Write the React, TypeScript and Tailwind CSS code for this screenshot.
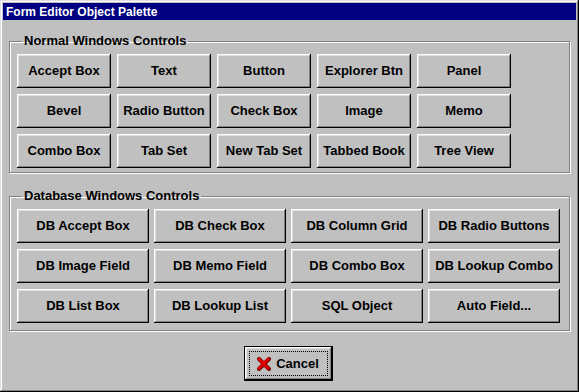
const normalControls = [
  "Accept Box",
  "Text",
  "Button",
  "Explorer Btn",
  "Panel",
  "Bevel",
  "Radio Button",
  "Check Box",
  "Image",
  "Memo",
  "Combo Box",
  "Tab Set",
  "New Tab Set",
  "Tabbed Book",
  "Tree View",
];

const dbControls = [
  "DB Accept Box",
  "DB Check Box",
  "DB Column Grid",
  "DB Radio Buttons",
  "DB Image Field",
  "DB Memo Field",
  "DB Combo Box",
  "DB Lookup Combo",
  "DB List Box",
  "DB Lookup List",
  "SQL Object",
  "Auto Field...",
];

const bevel =
  "shadow-[inset_-1px_-1px_#000,inset_1px_1px_#fff,inset_-2px_-2px_#808080,inset_2px_2px_#dfdfdf]";

function PaletteButton({ label }: { label: string }) {
  return (
    <button
      className={`h-[34px] bg-[#c0c0c0] ${bevel} text-[13px] font-bold text-black flex items-center justify-center`}
    >
      {label}
    </button>
  );
}

function GroupBox({
  title,
  bottom,
  children,
}: {
  title: string;
  bottom: string;
  children: React.ReactNode;
}) {
  return (
    <fieldset
      className={`mx-[6px] border border-[#808080] shadow-[inset_1px_1px_#fff,1px_1px_#fff] px-[7px] pt-[6px] ${bottom}`}
    >
      <legend className="ml-[5px] px-[2px] text-[13px] font-bold leading-[14px] text-black">
        {title}
      </legend>
      {children}
    </fieldset>
  );
}

function CancelIcon() {
  return (
    <svg width="14" height="14" viewBox="0 0 14 14">
      <path d="M2 2 L12 12 M12 2 L2 12" stroke="#800000" strokeWidth="4" strokeLinecap="round" />
      <path d="M2 2 L11 11 M11 2 L2 11" stroke="#e00000" strokeWidth="2.5" strokeLinecap="round" />
    </svg>
  );
}

export default function App() {
  return (
    <div
      className="w-[579px] h-[392px] bg-[#c0c0c0] p-[3px] shadow-[inset_-1px_-1px_#000,inset_1px_1px_#dfdfdf,inset_-2px_-2px_#808080,inset_2px_2px_#fff] flex flex-col"
      style={{ fontFamily: '"Liberation Sans", Arial, sans-serif' }}
    >
      <div className="h-[17px] bg-[#000080] px-[3px] flex items-center text-white text-[12px] font-bold">
        Form Editor Object Palette
      </div>

      <div className="mt-[14px]">
        <GroupBox title="Normal Windows Controls" bottom="pb-[4px]">
          <div className="grid grid-cols-[repeat(5,94px)] gap-x-[6px] gap-y-[6px]">
            {normalControls.map((c) => (
              <PaletteButton key={c} label={c} />
            ))}
          </div>
        </GroupBox>
      </div>

      <div className="mt-[16px]">
        <GroupBox title="Database Windows Controls" bottom="pb-[7px]">
          <div className="grid grid-cols-[repeat(4,132px)] gap-x-[5px] gap-y-[6px]">
            {dbControls.map((c) => (
              <PaletteButton key={c} label={c} />
            ))}
          </div>
        </GroupBox>
      </div>

      <div className="mt-[15px] flex justify-center">
        <button
          className={`ml-[-3px] w-[89px] h-[35px] bg-[#c0c0c0] border border-black ${bevel} p-[4px]`}
        >
          <span className="h-full flex items-center justify-center gap-[5px] border border-dotted border-black text-[13px] font-bold text-black">
            <CancelIcon />
            Cancel
          </span>
        </button>
      </div>
    </div>
  );
}
